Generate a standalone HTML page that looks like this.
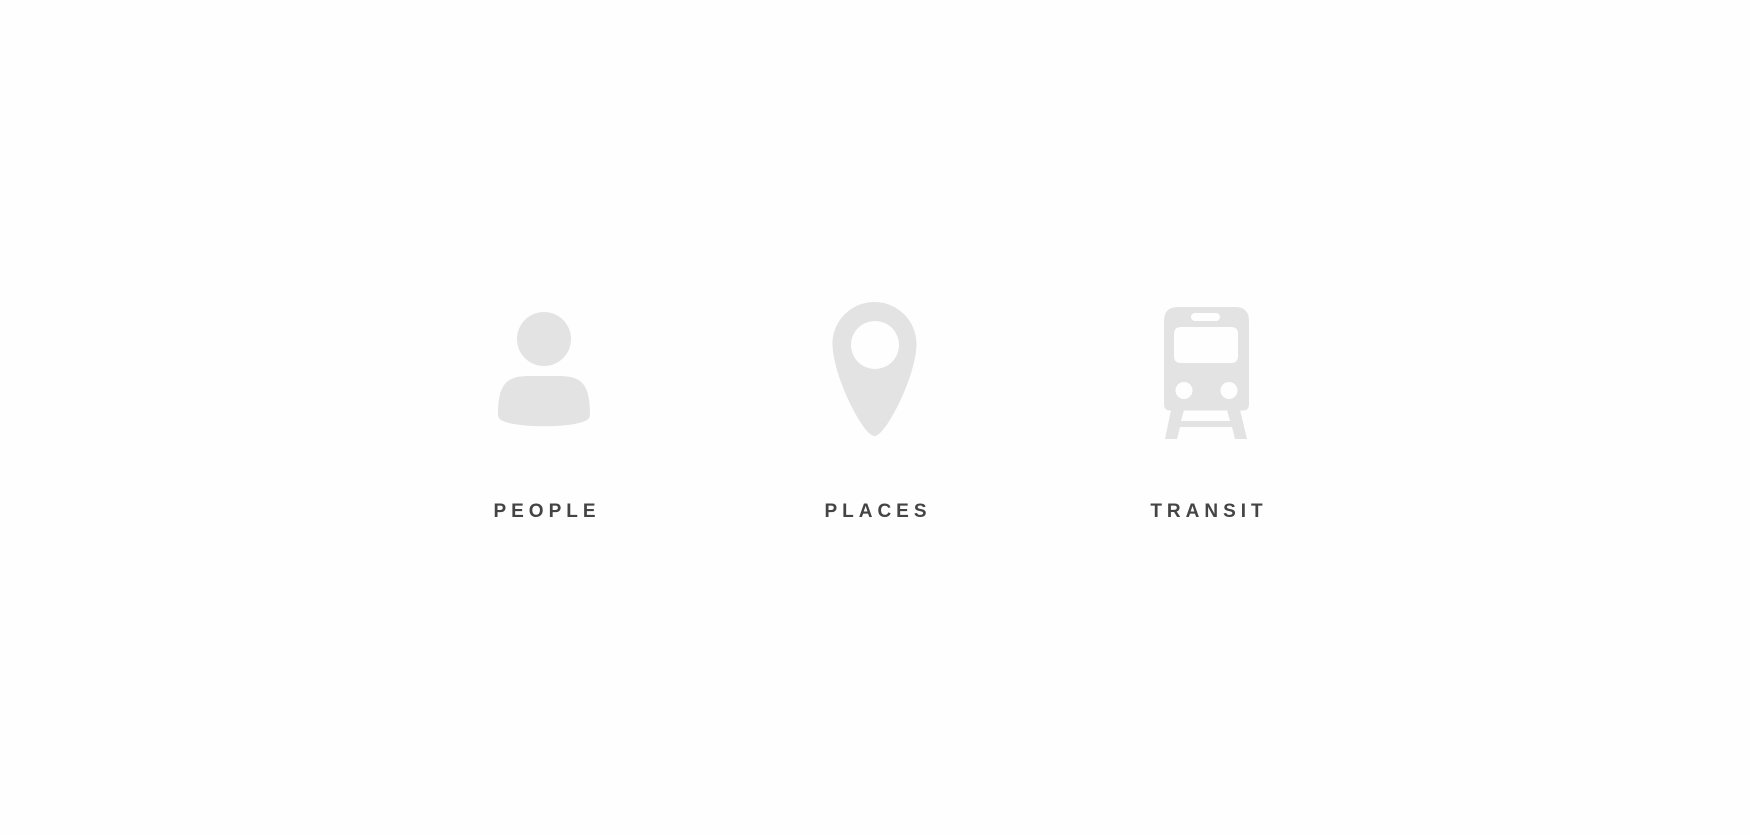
<!DOCTYPE html>
<html><head><style>
html,body{margin:0;padding:0;background:#fefefe;}
svg{display:block}
text{font-family:"Liberation Sans",sans-serif;font-weight:bold;font-size:19px;fill:#444;letter-spacing:5px}
</style></head><body>
<svg width="1750" height="835" viewBox="0 0 1750 835">
<rect width="1750" height="835" fill="#fefefe"/>
<g fill="#e3e3e3">
  <circle cx="544" cy="339" r="27"/>
  <path d="M498 414 C498 380 510 376 530 376 L558 376 C578 376 590 380 590 414 C590 418 588 420 585 421 C570 428 518 428 503 421 C500 420 498 418 498 414 Z"/>
  <path fill-rule="evenodd" d="M874.5 302 C897.7 302 916.5 320.8 916.5 344 C916.5 375 886 436 874.5 436 C863 436 832.5 375 832.5 344 C832.5 320.8 851.3 302 874.5 302 Z M875 321 A24 24 0 1 0 875.01 321 Z"/>
  <path fill-rule="evenodd" d="M1178 307 L1235 307 Q1249 307 1249 321 L1249 404 Q1249 410.5 1243 410.5 L1170 410.5 Q1164 410.5 1164 404 L1164 321 Q1164 307 1178 307 Z
  M1195 313 L1216 313 A4 4 0 0 1 1216 321 L1195 321 A4 4 0 0 1 1195 313 Z
  M1181 327 L1231 327 Q1238 327 1238 334 L1238 356 Q1238 363 1231 363 L1181 363 Q1174 363 1174 356 L1174 334 Q1174 327 1181 327 Z
  M1184 382 A8.5 8.5 0 1 0 1184.01 382 Z
  M1229 382 A8.5 8.5 0 1 0 1229.01 382 Z"/>
  <path d="M1171 410 L1184 410 L1181 421 L1230 421 L1227 410 L1240 410 L1247 439 L1235 439 L1232 427 L1180 427 L1177 439 L1165 439 Z"/>
</g>
<text x="547" y="517" text-anchor="middle">PEOPLE</text>
<text x="878" y="517" text-anchor="middle">PLACES</text>
<text x="1209" y="517" text-anchor="middle">TRANSIT</text>
</svg>
</body></html>
